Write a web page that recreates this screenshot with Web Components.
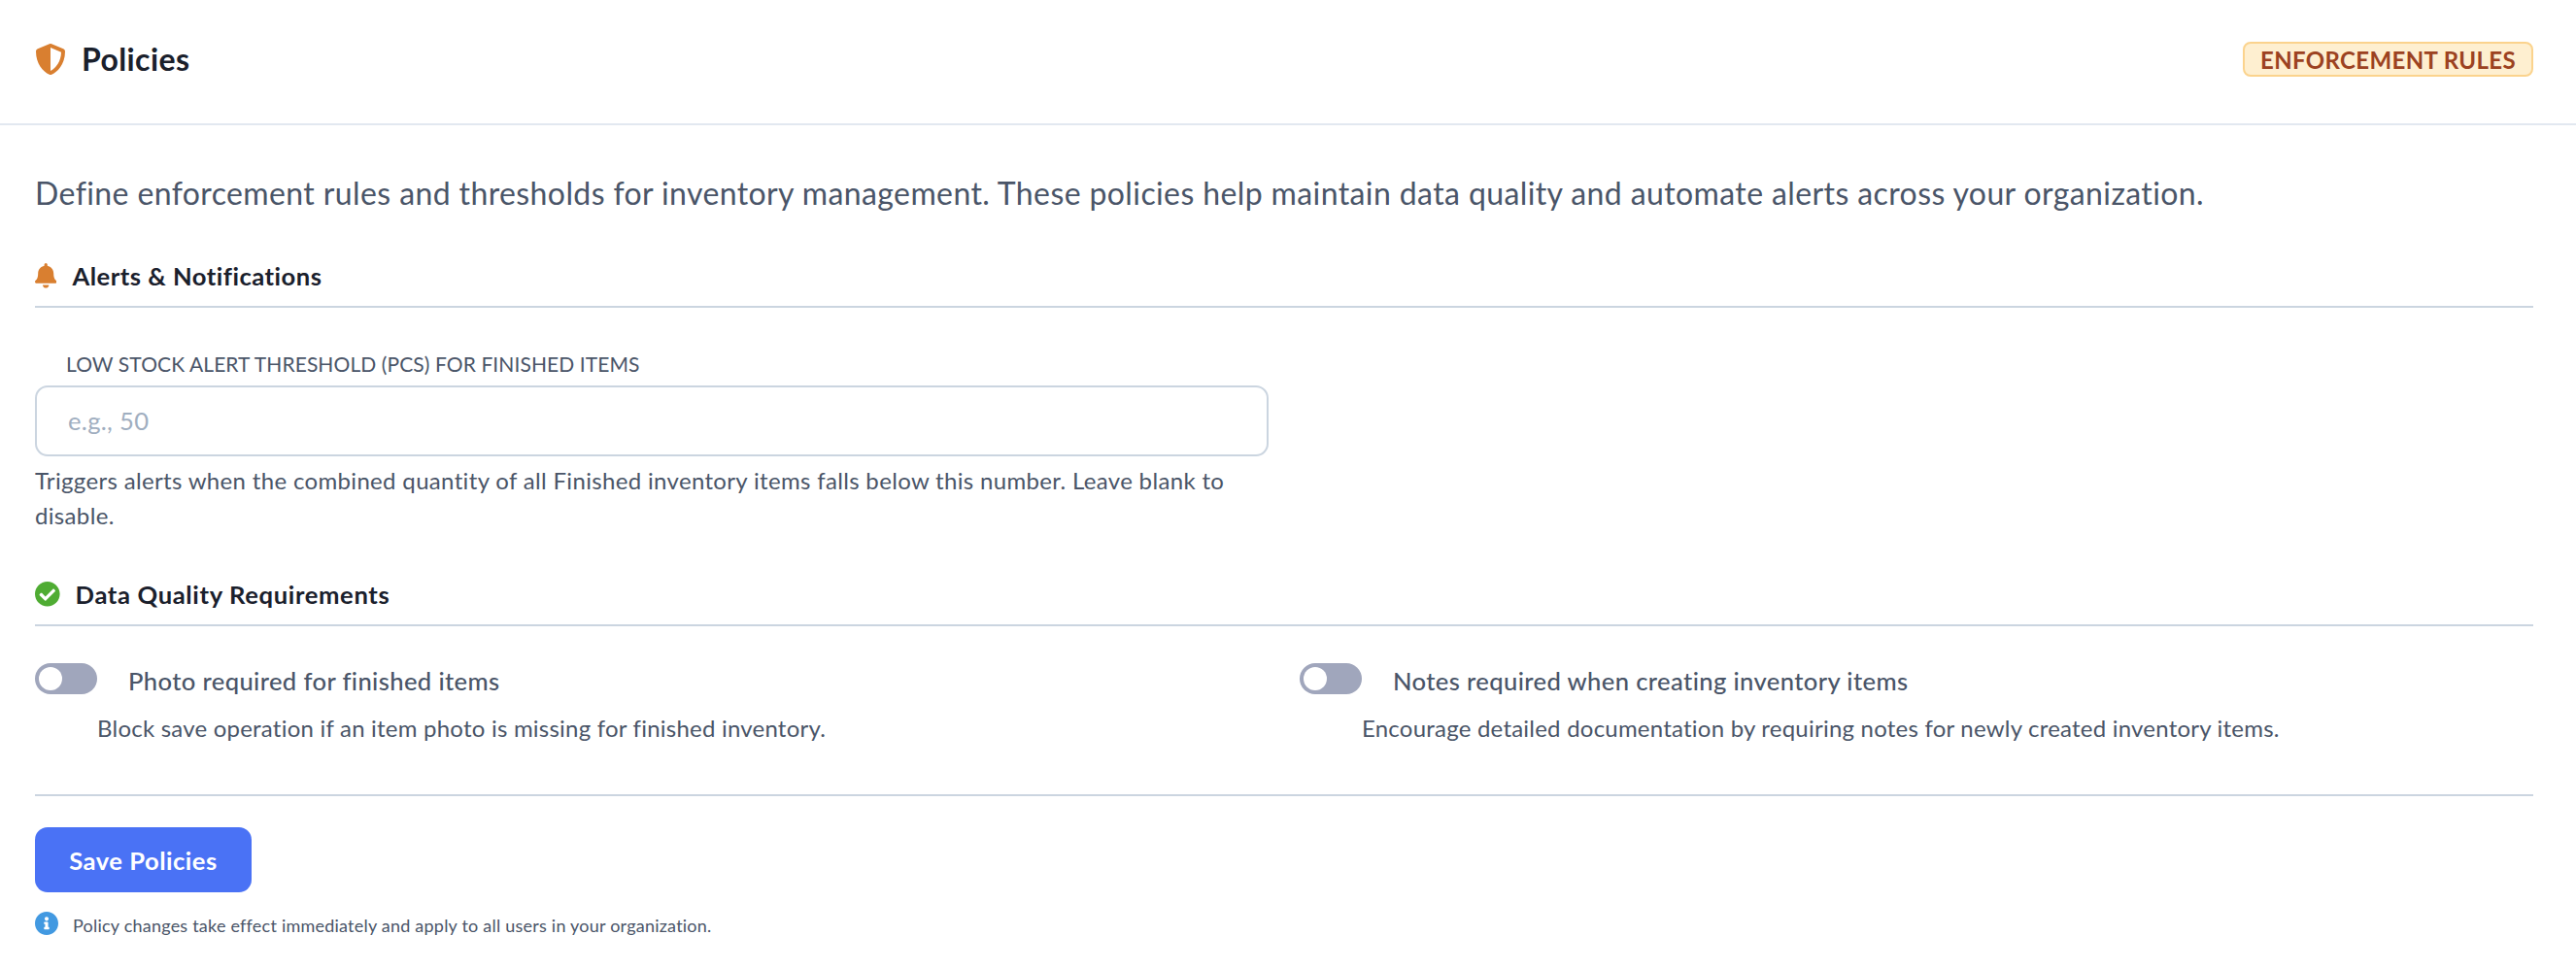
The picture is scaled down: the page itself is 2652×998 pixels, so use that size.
<!DOCTYPE html>
<html lang="en">
<head>
<meta charset="utf-8">
<title>Policies</title>
<style>
html, body { margin: 0; background: #fff; }
body { font-family: "Lato", "Noto Sans", sans-serif; color: #1a202c; }
</style>
</head>
<body>
<policies-page></policies-page>

<script>
const ICONS = {
    shield: ['0 0 512 512', 'M466.5 83.7l-192-80a48.15 48.15 0 0 0-36.9 0l-192 80C27.7 91.1 16 108.6 16 128c0 198.5 114.5 335.7 221.5 380.3 11.8 4.9 25.1 4.9 36.9 0C360.1 472.6 496 349.3 496 128c0-19.4-11.7-36.9-29.5-44.3zM256.1 446.3l-.1-381 175.9 73.3c-3.3 151.4-82.1 261.1-175.8 307.7z'],
    bell: ['0 0 448 512', 'M224 512c35.32 0 63.97-28.65 63.97-64H160.03c0 35.35 28.65 64 63.97 64zm215.39-149.71c-19.32-20.76-55.47-51.99-55.47-154.29 0-77.7-54.48-139.9-127.94-155.16V32c0-17.67-14.32-32-31.98-32s-31.98 14.33-31.98 32v20.84C118.56 68.1 64.08 130.3 64.08 208c0 102.3-36.15 133.53-55.47 154.29-6 6.45-8.66 14.16-8.61 21.71.11 16.4 12.98 32 32.1 32h383.8c19.12 0 32-15.6 32.1-32 .05-7.55-2.61-15.27-8.61-21.71z'],
    check: ['8 8 496 496', 'M504 256c0 136.967-111.033 248-248 248S8 392.967 8 256 119.033 8 256 8s248 111.033 248 248zM227.314 387.314l184-184c6.248-6.248 6.248-16.379 0-22.627l-22.627-22.627c-6.248-6.249-16.379-6.249-22.628 0L216 308.118l-70.059-70.059c-6.248-6.248-16.379-6.248-22.628 0l-22.627 22.627c-6.248 6.248-6.248 16.379 0 22.627l104 104c6.249 6.249 16.379 6.249 22.628.001z'],
    info: ['8 8 496 496', 'M256 8C119.043 8 8 119.083 8 256c0 136.997 111.043 248 248 248s248-111.003 248-248C504 119.083 392.957 8 256 8zm0 110c23.196 0 42 18.804 42 42s-18.804 42-42 42-42-18.804-42-42 18.804-42 42-42zm56 254c0 6.627-5.373 12-12 12h-88c-6.627 0-12-5.373-12-12v-24c0-6.627 5.373-12 12-12h12v-64h-12c-6.627 0-12-5.373-12-12v-24c0-6.627 5.373-12 12-12h64c6.627 0 12 5.373 12 12v100h12c6.627 0 12 5.373 12 12v24z']
};

class FaIcon extends HTMLElement {
    constructor() {
        super();
        const [box, d] = ICONS[this.getAttribute('name')];
        const size = this.getAttribute('size') || 25.6;
        const [, , w, h] = box.split(' ').map(Number);
        this.attachShadow({mode: 'open'}).innerHTML = `
<style>
:host { display: inline-flex; flex: none; color: ${this.getAttribute('color') || 'currentColor'}; }
svg { display: block; width: ${size * w / h}px; height: ${size}px; fill: currentColor; }
</style>
<svg viewBox="${box}"><path d="${d}"></path></svg>`;
    }
}

class SectionHead extends HTMLElement {
    constructor() {
        super();
        this.attachShadow({mode: 'open'}).innerHTML = `
<style>
:host {
    display: flex; align-items: center; gap: 16px;
    padding-bottom: 12px;
    border-bottom: 2px solid #cbd5e0;
    font-size: 25.6px; line-height: 38px; font-weight: 700; color: #1a202c;
    letter-spacing: var(--head-spacing, .5px);
}
</style>
<slot name="icon"></slot><slot></slot>`;
    }
}

class ThresholdField extends HTMLElement {
    constructor() {
        super();
        this.attachShadow({mode: 'open'}).innerHTML = `
<style>
:host { display: block; width: 1270px; }
label { display: block; margin: 0 0 7px 32px; font-size: 21px; line-height: 30px; color: #4a5568; text-transform: uppercase; letter-spacing: .09px; }
input {
    display: block; box-sizing: border-box; width: 100%; height: 73px;
    padding: 0 32px 1px;
    border: 2px solid #cbd5e0; border-radius: 13px; background: #fff; outline: none;
    font: inherit; font-size: 25.6px; letter-spacing: .3px; color: #1a202c;
}
input::placeholder { color: #a0aec0; opacity: 1; }
p { margin: 7px 0 0; font-size: 24px; line-height: 36px; color: #4a5568; letter-spacing: .335px; }
</style>
<label for="f"><slot name="label"></slot></label>
<input id="f" type="text" placeholder="${this.getAttribute('placeholder')}">
<p><slot></slot></p>`;
    }
}

class PolicyToggle extends HTMLElement {
    constructor() {
        super();
        this.attachShadow({mode: 'open'}).innerHTML = `
<style>
:host { display: block; }
.row { display: flex; align-items: center; gap: 32px; font-size: 25.6px; line-height: 38px; font-weight: 500; color: #4a5568; letter-spacing: .37px; }
.row span { padding-top: 2px; margin-bottom: -2px; }
.track { flex: none; box-sizing: border-box; width: 64px; height: 32px; padding: 4px; border-radius: 16px; background: #a0a6bc; }
.knob { width: 24px; height: 24px; border-radius: 50%; background: #fff; }
p { margin: 14px 0 0 64px; font-size: 24px; line-height: 36px; color: #4a5568; letter-spacing: .22px; }
</style>
<div class="row"><div class="track"><div class="knob"></div></div><span><slot name="label"></slot></span></div>
<p><slot></slot></p>`;
    }
}

class PoliciesPage extends HTMLElement {
    constructor() {
        super();
        this.attachShadow({mode: 'open'}).innerHTML = `
<style>
:host { display: block; }
header {
    display: flex; align-items: center; justify-content: space-between;
    box-sizing: border-box; height: 129px; padding: 0 44px 5px 36px;
    border-bottom: 2px solid #e2e8f0;
}
h1 { display: flex; align-items: center; gap: 16px; margin: 0; font-size: 32px; line-height: 48px; font-weight: 700; color: #1a202c; letter-spacing: .4px; }
.badge {
    box-sizing: border-box; height: 36px; padding: 0 16px;
    display: flex; align-items: center;
    border: 2px solid #fbd38d; border-radius: 8px; background: #feefd0;
    font-size: 24px; font-weight: 700; color: #9c4221; letter-spacing: .35px;
}
main { padding: 46px 44px 0 36px; }
.intro { margin: 0 0 42px; font-size: 32px; line-height: 48px; color: #4a5568; letter-spacing: .39px; }
threshold-field { margin-top: 43px; }
.data { margin-top: 44px; --head-spacing: .64px; }
.toggles { display: grid; grid-template-columns: 1fr 1fr; gap: 32px; margin-top: 35px; padding-bottom: 50px; border-bottom: 2px solid #cbd5e0; }
button {
    display: block; margin-top: 32px; box-sizing: border-box; width: 223px; height: 67px;
    border: 0; border-radius: 13px; background: #4a72f5; color: #fff;
    font: inherit; font-size: 25.6px; font-weight: 700; letter-spacing: .5px;
}
.note { display: flex; align-items: center; gap: 15px; margin-top: 20px; font-size: 18px; line-height: 24px; color: #4a5568; letter-spacing: .22px; }
.note span { position: relative; top: 2px; }
</style>
<header>
    <h1><fa-icon name="shield" size="32" color="#d97f30"></fa-icon>Policies</h1>
    <div class="badge">ENFORCEMENT RULES</div>
</header>
<main>
    <p class="intro">Define enforcement rules and thresholds for inventory management. These policies help maintain data quality and automate alerts across your organization.</p>
    <section-head><fa-icon slot="icon" name="bell" color="#d97f30"></fa-icon>Alerts &amp; Notifications</section-head>
    <threshold-field placeholder="e.g., 50">
        <span slot="label">Low Stock Alert Threshold (PCS) for Finished Items</span>
        Triggers alerts when the combined quantity of all Finished inventory items falls below this number. Leave blank to disable.
    </threshold-field>
    <section-head class="data"><fa-icon slot="icon" name="check" size="25.6" color="#4fac33"></fa-icon>Data Quality Requirements</section-head>
    <div class="toggles">
        <policy-toggle><span slot="label">Photo required for finished items</span>Block save operation if an item photo is missing for finished inventory.</policy-toggle>
        <policy-toggle><span slot="label">Notes required when creating inventory items</span>Encourage detailed documentation by requiring notes for newly created inventory items.</policy-toggle>
    </div>
    <button type="button">Save Policies</button>
    <div class="note"><fa-icon name="info" size="24" color="#4299e1"></fa-icon><span>Policy changes take effect immediately and apply to all users in your organization.</span></div>
</main>`;
    }
}

customElements.define('fa-icon', FaIcon);
customElements.define('section-head', SectionHead);
customElements.define('threshold-field', ThresholdField);
customElements.define('policy-toggle', PolicyToggle);
customElements.define('policies-page', PoliciesPage);
</script>
</body>
</html>
